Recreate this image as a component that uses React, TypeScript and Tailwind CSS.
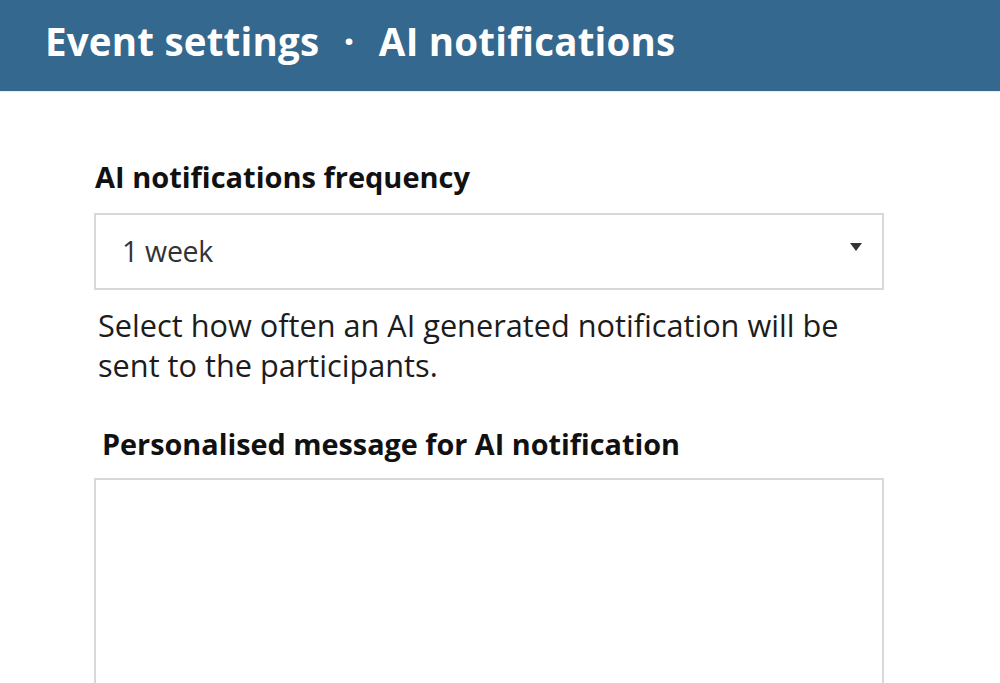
import React from "react";

export default function App() {
  return (
    <div className="w-[1000px] h-[683px] overflow-hidden bg-white" style={{ fontFamily: '"Open Sans", sans-serif' }}>
      <header className="h-[92px] bg-[#34688e] border-b border-[#e6ecf1] flex items-center pl-[45px] pb-[8px]">
        <h1 className="text-white font-bold text-[38.5px] tracking-[0.2px] leading-none">
          Event settings <span className="mx-[14px]">·</span> AI notifications
        </h1>
      </header>

      <main className="pl-[94px] pr-[116px] pt-[70px]">
        <label className="block font-bold text-[29px] text-[#111] leading-none pl-[1px]">
          AI notifications frequency
        </label>

        <div className="mt-[22px] h-[77px] border-2 border-[#d8d8d8] flex items-center justify-between pl-[26px] pr-[20px]">
          <span className="text-[28.5px] text-[#333] tracking-[-0.3px]">1 week</span>
          <svg width="12" height="9" viewBox="0 0 12 9" className="mb-[8px]">
            <path d="M0 0 H12 L6 8 Z" fill="#333" />
          </svg>
        </div>

        <p className="mt-[15px] text-[30.7px] leading-[40px] text-[#1c1c1c] pl-[4px]">
          Select how often an AI generated notification will be
          <br />
          sent to the participants.
        </p>

        <label className="block mt-[45px] font-bold text-[28.8px] text-[#111] leading-none pl-[8px]">
          Personalised message for AI notification
        </label>

        <textarea className="block mt-[19px] w-full h-[240px] border-2 border-[#d8d8d8] resize-none outline-none" />
      </main>
    </div>
  );
}
